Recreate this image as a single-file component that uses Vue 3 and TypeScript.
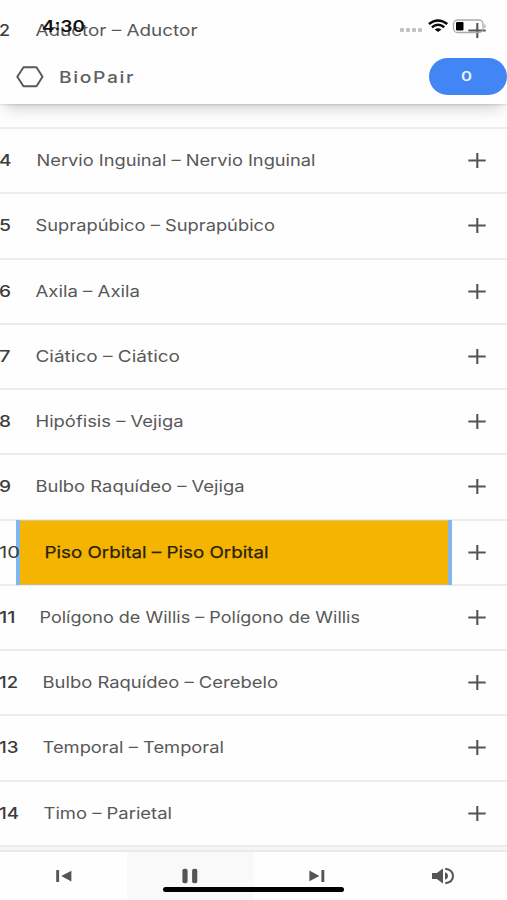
<script setup lang="ts">
interface Pair {
  id: number
  label: string
  numWidth: number
  gap: number
  width: number
  active?: boolean
}

const pairs: Pair[] = [
  { id: 2, label: 'Aductor – Aductor', numWidth: 10, gap: 25.5, width: 161 },
  { id: 3, label: '', numWidth: 10, gap: 25, width: 0 },
  { id: 4, label: 'Nervio Inguinal – Nervio Inguinal', numWidth: 11.5, gap: 25, width: 278 },
  { id: 5, label: 'Suprapúbico – Suprapúbico', numWidth: 11, gap: 24.5, width: 238.5 },
  { id: 6, label: 'Axila – Axila', numWidth: 11, gap: 24.5, width: 103.5 },
  { id: 7, label: 'Ciático – Ciático', numWidth: 10.5, gap: 25, width: 143.5 },
  { id: 8, label: 'Hipófisis – Vejiga', numWidth: 11, gap: 24.5, width: 147 },
  { id: 9, label: 'Bulbo Raquídeo – Vejiga', numWidth: 11, gap: 24.5, width: 208 },
  { id: 10, label: 'Piso Orbital – Piso Orbital', numWidth: 20, gap: 24.5, width: 223, active: true },
  { id: 11, label: 'Polígono de Willis – Polígono de Willis', numWidth: 15.5, gap: 24.5, width: 319.5 },
  { id: 12, label: 'Bulbo Raquídeo – Cerebelo', numWidth: 18, gap: 24.5, width: 234.5 },
  { id: 13, label: 'Temporal – Temporal', numWidth: 18.5, gap: 24.5, width: 180.5 },
  { id: 14, label: 'Timo – Parietal', numWidth: 19, gap: 24.5, width: 127.5 },
]
</script>

<template>
  <div class="screen">
    <main class="list">
      <div v-for="p in pairs" :key="p.id" class="row" :class="{ active: p.active }">
        <div v-if="p.active" class="highlight"></div>
        <template v-if="p.label">
          <svg class="num" :width="p.numWidth" height="24">
            <text x="-1" y="18" :textLength="p.numWidth + 1" lengthAdjust="spacingAndGlyphs">{{ p.id }}</text>
          </svg>
          <svg class="label" :width="p.width" height="24" :style="{ marginLeft: p.gap + 'px' }">
            <text x="-0.5" y="18" :textLength="p.width + 1" lengthAdjust="spacingAndGlyphs">{{ p.label }}</text>
          </svg>
          <svg class="plus" width="18" height="16" viewBox="0 0 18 16">
            <path d="M0.3 8.5H17.7M9.3 1V16" />
          </svg>
        </template>
      </div>
    </main>

    <header class="header">
      <svg class="hex" width="28" height="22" viewBox="0 0 28 22">
        <path d="M7.5 1.3H20.5L26.5 10.7L20.5 20.2H7.5L1.3 10.7Z" />
      </svg>
      <svg class="title" width="74" height="24">
        <text x="0" y="18" textLength="63.5" lengthAdjust="spacingAndGlyphs" transform="scale(1.2 1)">BioPair</text>
      </svg>
      <button class="counter">
        <svg width="11" height="14"><text x="0" y="11.6" textLength="11" lengthAdjust="spacingAndGlyphs">0</text></svg>
      </button>
    </header>

    <div class="status">
      <svg class="time" width="44" height="20">
        <text x="0" y="15" textLength="43" lengthAdjust="spacingAndGlyphs">4:30</text>
      </svg>
      <svg class="indicators" width="90" height="18" viewBox="0 0 90 18">
        <g fill="#c3c3c3">
          <rect x="1" y="11" width="4" height="4" rx="1" />
          <rect x="7" y="11" width="4" height="4" rx="1" />
          <rect x="13" y="11" width="4" height="4" rx="1" />
          <rect x="19" y="11" width="4" height="4" rx="1" />
        </g>
        <g fill="none" stroke="#080808" stroke-width="2.4">
          <path d="M29.9 7Q39 -0.2 48.3 7" />
          <path d="M32.9 10.2Q39 5.2 45.3 10.2" />
        </g>
        <path d="M35.7 12.4Q39 10 42.5 12.4L39 15Z" fill="#080808" />
        <rect x="54.5" y="3" width="29.5" height="12.5" rx="4" fill="none" stroke="#aaa" stroke-width="1.3" />
        <rect x="57" y="5" width="7.5" height="8.5" rx="1.3" fill="#000" />
        <path d="M85.5 7Q88 9 85.5 11.5Z" fill="#999" />
      </svg>
    </div>

    <footer class="player">
      <div class="control prev">
        <svg width="16" height="14" viewBox="0 0 16 14">
          <rect x="0.2" y="1" width="2.9" height="12" rx="0.5" />
          <path d="M15.4 1.8V12.4L5.2 7.1Z" />
        </svg>
      </div>
      <div class="control current">
        <svg width="16" height="16" viewBox="0 0 16 16">
          <rect x="0.4" y="0.8" width="5.2" height="14.4" rx="2" />
          <rect x="10.1" y="0.8" width="5.2" height="14.4" rx="2" />
        </svg>
      </div>
      <div class="control">
        <svg width="16" height="14" viewBox="0 0 16 14">
          <path d="M0.4 1.6V12.2L10.4 6.9Z" />
          <rect x="12.4" y="1" width="2.9" height="12" rx="0.5" />
        </svg>
      </div>
      <div class="control volume">
        <svg width="24" height="18" viewBox="0 0 24 18">
          <path d="M1 6H5.8L12 1.5V16.5L5.8 12H1Z" />
          <path d="M14 5.3Q17 6.3 17 9T14 12.7Z" />
          <path d="M14.2 1.7C19.8 2.5 22 5.7 22 9S19.8 15.5 14.2 16.3" fill="none" stroke="#555" stroke-width="2" />
        </svg>
      </div>
      <div class="home-bar"></div>
    </footer>
  </div>
</template>

<style>
body {
  margin: 0;
  background: #fefefe;
}
</style>

<style scoped>
.screen {
  position: relative;
  width: 507px;
  height: 900px;
  overflow: hidden;
  background: #fefefe;
  font-family: Inter, 'Liberation Sans', sans-serif;
}

svg {
  display: block;
  flex: none;
  overflow: visible;
}

.list {
  display: flex;
  flex-direction: column;
  margin-top: -1.5px;
}

.row {
  position: relative;
  display: flex;
  align-items: center;
  box-sizing: border-box;
  flex: none;
  height: 65.25px;
  padding: 0 21px 1px 0;
  border-bottom: 2px solid #ececec;
}

.num,
.label,
.plus {
  position: relative;
}

.num text {
  font-size: 16px;
  font-weight: 500;
  fill: #3c3c3c;
}

.label text {
  font-size: 16.3px;
  fill: #585858;
}

.active .label text {
  font-weight: 400;
  fill: #2a220a;
  stroke: #2a220a;
  stroke-width: 0.25px;
}

.active .num text {
  font-weight: 400;
}

.plus {
  margin-left: auto;
  fill: none;
  stroke: #555;
  stroke-width: 2.1;
}

.highlight {
  position: absolute;
  top: -1px;
  left: 16px;
  box-sizing: border-box;
  width: 436px;
  height: 65px;
  border: solid #7fb7ee;
  border-width: 0 4px;
  background: #f5b400;
  box-shadow: inset 0 1px #dfc780, inset 0 -1px #c9b980;
}

.header {
  position: absolute;
  top: 50px;
  left: 0;
  display: flex;
  align-items: center;
  box-sizing: border-box;
  width: 507px;
  height: 53.5px;
  padding-left: 16px;
  background: #fefefe;
  box-shadow: 0 10px 12px -7px rgba(0, 0, 0, 0.16), 0 1px 2px rgba(0, 0, 0, 0.12), 0 12px 18px rgba(0, 0, 0, 0.035);
  clip-path: inset(0 0 -40px 0);
}

.hex {
  fill: none;
  stroke: #5a5a5a;
  stroke-width: 2;
  stroke-linejoin: round;
}

.title {
  margin-left: 14.5px;
}

.title text {
  font-size: 16.5px;
  font-weight: 500;
  letter-spacing: 1.4px;
  fill: #606060;
}

.counter {
  display: flex;
  align-items: center;
  justify-content: center;
  width: 78.5px;
  height: 36.5px;
  margin: 0 0 1px auto;
  padding: 0 2px 0 0;
  border: 0;
  border-radius: 19px;
  background: #4285f4;
}

.counter text {
  font: 600 13px Inter, sans-serif;
  fill: #e8f0fe;
}

.status {
  position: absolute;
  top: 17px;
  left: 42px;
  display: flex;
  justify-content: space-between;
  width: 447px;
}

.time text {
  font-size: 15.5px;
  font-weight: 600;
  fill: #111;
}

.player {
  position: absolute;
  bottom: 0;
  left: 0;
  display: grid;
  grid-template-columns: repeat(4, 1fr);
  width: 507px;
  height: 48px;
  background: #fefefe;
  box-shadow: 0 -2px #e9e9e9, 0 -5px #f6f6f6;
}

.control {
  display: flex;
  align-items: center;
  justify-content: center;
  fill: #555;
}

.prev {
  padding-left: 2px;
}

.volume {
  padding-right: 2px;
}

.current {
  background: #f9f9f9;
}

.home-bar {
  position: absolute;
  bottom: 8px;
  left: 163px;
  width: 181px;
  height: 5px;
  border-radius: 3px;
  background: #000;
}
</style>
